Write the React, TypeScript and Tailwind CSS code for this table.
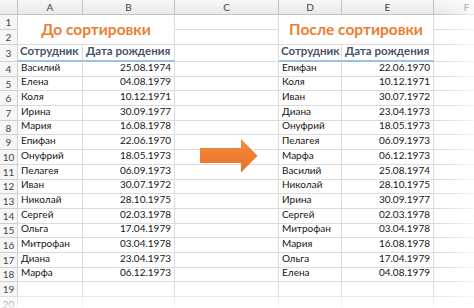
import React from "react";

const left: [string, string][] = [
  ["Василий", "25.08.1974"],
  ["Елена", "04.08.1979"],
  ["Коля", "10.12.1971"],
  ["Ирина", "30.09.1977"],
  ["Мария", "16.08.1978"],
  ["Епифан", "22.06.1970"],
  ["Онуфрий", "18.05.1973"],
  ["Пелагея", "06.09.1973"],
  ["Иван", "30.07.1972"],
  ["Николай", "28.10.1975"],
  ["Сергей", "02.03.1978"],
  ["Ольга", "17.04.1979"],
  ["Митрофан", "03.04.1978"],
  ["Диана", "23.04.1973"],
  ["Марфа", "06.12.1973"],
];

const right: [string, string][] = [
  ["Епифан", "22.06.1970"],
  ["Коля", "10.12.1971"],
  ["Иван", "30.07.1972"],
  ["Диана", "23.04.1973"],
  ["Онуфрий", "18.05.1973"],
  ["Пелагея", "06.09.1973"],
  ["Марфа", "06.12.1973"],
  ["Василий", "25.08.1974"],
  ["Николай", "28.10.1975"],
  ["Ирина", "30.09.1977"],
  ["Сергей", "02.03.1978"],
  ["Митрофан", "03.04.1978"],
  ["Мария", "16.08.1978"],
  ["Ольга", "17.04.1979"],
  ["Елена", "04.08.1979"],
];

const cell = "border-r border-b border-[#dcdcdc] bg-white";
const rowHead =
  "border-r border-b border-[#d0d0d0] bg-[#f6f6f6] flex items-center justify-center text-[10px] text-[#444] pt-[1px]";
const colHead =
  "border-r border-b border-[#c4c4c4] bg-gradient-to-b from-[#f7f7f7] to-[#e9e9e9] flex items-center justify-center text-[10px] text-[#444]";
const nameCell = `${cell} flex items-end pb-[1px] pl-[3px] text-[10px] text-[#151515] whitespace-nowrap`;
const dateCell = `${cell} flex items-end justify-end pb-[1px] pr-[3px] text-[10px] text-[#151515] whitespace-nowrap`;
const headCell =
  "border-r border-[#dcdcdc] border-b-2 border-b-[#9bc2e6] bg-white flex items-end pb-[1px] pl-[2px] text-[11.5px] font-bold text-[#44546a] whitespace-nowrap";
const titleCell =
  "col-span-2 row-span-2 border-r border-b border-[#dcdcdc] bg-white flex items-center justify-center text-[15.5px] font-bold text-[#ee7d31] whitespace-nowrap";

export default function App() {
  const rows = [];
  for (let i = 0; i < 17; i++) {
    const n = i + 4;
    const l = left[i];
    const r = right[i];
    rows.push(
      <React.Fragment key={n}>
        <div className={rowHead}>{n}</div>
        <div className={nameCell}>{l ? l[0] : ""}</div>
        <div className={dateCell}>{l ? l[1] : ""}</div>
        <div className={cell} />
        <div className={nameCell}>{r ? r[0] : ""}</div>
        <div className={dateCell}>{r ? r[1] : ""}</div>
        <div className={cell} />
      </React.Fragment>
    );
  }

  return (
    <div
      className="relative w-[474px] h-[308px] overflow-hidden bg-white"
      style={{ fontFamily: "Lato, 'Noto Sans', sans-serif" }}
    >
      <div className="grid grid-cols-[18px_65px_92px_104px_63px_92px_66px] grid-rows-[15px_15px_15px_17px_repeat(17,14.7px)]">
        {/* column header row */}
        <div className={colHead} />
        <div className={colHead}>A</div>
        <div className={colHead}>B</div>
        <div className={colHead}>C</div>
        <div className={colHead}>D</div>
        <div className={colHead}>E</div>
        <div className={colHead}>F</div>

        {/* rows 1-2 with merged titles */}
        <div className={rowHead}>1</div>
        <div className={titleCell}>До сортировки</div>
        <div className={cell} />
        <div className={titleCell}>После сортировки</div>
        <div className={cell} />
        <div className={rowHead}>2</div>
        <div className={cell} />
        <div className={cell} />

        {/* row 3 headers */}
        <div className={rowHead}>3</div>
        <div className={headCell}>Сотрудник</div>
        <div className={`${headCell} pl-[3px]`}>Дата рождения</div>
        <div className={cell} />
        <div className={headCell}>Сотрудник</div>
        <div className={`${headCell} pl-[3px]`}>Дата рождения</div>
        <div className={cell} />

        {rows}
      </div>

      {/* arrow */}
      <svg
        className="absolute left-[200px] top-[139px]"
        width="58"
        height="34"
        viewBox="0 0 58 34"
      >
        <defs>
          <linearGradient id="ag" x1="0" y1="0" x2="0" y2="1">
            <stop offset="0" stopColor="#f48a3e" />
            <stop offset="1" stopColor="#ea7326" />
          </linearGradient>
        </defs>
        <polygon
          points="0,9 41,9 41,0 57.5,16.7 41,33.4 41,24 0,24"
          fill="url(#ag)"
        />
      </svg>

      {/* edge fades */}
      <div className="pointer-events-none absolute right-0 top-0 h-full w-[36px] bg-gradient-to-r from-white/0 to-white/70" />
      <div className="pointer-events-none absolute left-0 bottom-0 w-full h-[18px] bg-gradient-to-b from-white/0 to-white/85" />
    </div>
  );
}
